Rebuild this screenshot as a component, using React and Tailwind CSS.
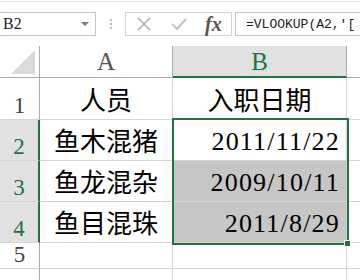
import React from 'react';

// 表格数据
const linhas = [
  { n: 1, a: '人员', b: '入职日期', h: 'h-[42px]', cab: true },
  { n: 2, a: '鱼木混猪', b: '2011/11/22', h: 'h-[41px]' },
  { n: 3, a: '鱼龙混杂', b: '2009/10/11', h: 'h-[41px]' },
  { n: 4, a: '鱼目混珠', b: '2011/8/29', h: 'h-[41px]' },
  { n: 5, a: '', b: '', h: 'h-[26px]' },
  { n: '', a: '', b: '', h: 'h-[20px]' },
];

const serif = "font-['Liberation_Serif','Noto_Sans_CJK_SC',serif]";
const cjk = "font-['Noto_Sans_CJK_SC','Noto_Sans',sans-serif]";

export default function App() {
  return (
    <div className="relative w-[360px] h-[280px] overflow-hidden bg-white">
      {/* BARRA DE FÓRMULAS */}
      <div className="mt-[1px] h-[45px] border-t border-[#e3e3e3] pt-[10px] flex items-start">
        <div className="w-[96px] h-[24px] border border-l-0 border-[#c6c6c6] flex items-center justify-between pl-[3px] pr-[6px]">
          <span className={`${serif} text-[16px] text-[#222] leading-none`}>B2</span>
          <span className="w-0 h-0 border-l-[4px] border-r-[4px] border-t-[4px] border-l-transparent border-r-transparent border-t-[#777]" />
        </div>
        <div className="w-[29px] h-[24px] flex flex-col items-center justify-center gap-[2px]">
          <span className="w-[2px] h-[2px] bg-[#bbb]" />
          <span className="w-[2px] h-[2px] bg-[#bbb]" />
          <span className="w-[2px] h-[2px] bg-[#bbb]" />
        </div>
        <div className="w-[107px] h-[24px] border border-[#d4d4d4] flex items-center">
          <svg width="14" height="14" viewBox="0 0 14 14" className="ml-[11px]">
            <path d="M1 1 L13 13 M13 1 L1 13" stroke="#b5b5b5" strokeWidth="1.6" fill="none" />
          </svg>
          <svg width="16" height="14" viewBox="0 0 16 14" className="ml-[20px]">
            <path d="M1 7 L6 12 L15 2" stroke="#c2c2c2" strokeWidth="2" fill="none" />
          </svg>
          <span className={`ml-[18px] ${serif} italic font-bold text-[20px] leading-none text-[#555]`}>fx</span>
        </div>
        <div className="ml-[3px] flex-1 h-[24px] border border-r-0 border-[#c6c6c6] flex items-center pl-[10px]">
          <span className="font-['Liberation_Mono',monospace] text-[13px] text-[#222] leading-none whitespace-nowrap">=VLOOKUP(A2,'[</span>
        </div>
      </div>

      {/* CABEÇALHO DAS COLUNAS */}
      <div className="grid grid-cols-[40px_133px_174px_13px] h-[32px]">
        <div className="border-r border-b border-[#ababab] flex items-end justify-end pr-[4px] pb-[3px]">
          <svg width="24" height="24" viewBox="0 0 24 24">
            <path d="M24 0 L24 24 L0 24 Z" fill="#dadada" />
          </svg>
        </div>
        <div className={`border-r border-b border-[#ababab] flex items-center justify-center ${serif} text-[25px] text-[#555] leading-none`}>A</div>
        <div className={`bg-[#e1e1e1] border-r border-[#ababab] border-b-2 border-b-[#217346] flex items-center justify-center ${serif} text-[25px] text-[#217346] leading-none`}>B</div>
        <div className="border-b border-[#ababab]" />
      </div>

      {/* LINHAS */}
      {linhas.map((l, i) => {
        const sel = l.n >= 2 && l.n <= 4;
        const cinza = l.n === 3 || l.n === 4;
        return (
          <div key={i} className={`grid grid-cols-[40px_133px_174px_13px] ${l.h}`}>
            <div
              className={`border-b border-[#d4d4d4] flex items-end justify-center pb-[2px] ${serif} text-[23px] leading-none ${
                sel ? 'bg-[#e1e1e1] text-[#217346] border-r-2 border-r-[#217346]' : 'border-r border-r-[#ababab] text-[#444]'
              }`}
            >
              {l.n}
            </div>
            <div className={`border-r border-b border-[#d4d4d4] flex items-center justify-center ${cjk} text-[26px] text-black leading-none`}>
              {l.a}
            </div>
            <div
              className={`border-r border-b border-[#d4d4d4] flex items-center ${
                l.cab ? `justify-center ${cjk}` : `justify-end pr-[6px] pt-[4px] ${serif} tracking-[1.2px]`
              } text-[26px] text-black leading-none ${cinza ? 'bg-[#c6c6c6]' : ''}`}
            >
              {l.b}
            </div>
            <div className="border-b border-[#d4d4d4]" />
          </div>
        );
      })}

      {/* SELEÇÃO B2:B4 */}
      <div className="absolute left-[172px] top-[118px] w-[177px] h-[127px] border-2 border-[#217346]" />
      <div className="absolute left-[344px] top-[240px] w-[7px] h-[7px] bg-[#217346] border border-white" />
    </div>
  );
}
